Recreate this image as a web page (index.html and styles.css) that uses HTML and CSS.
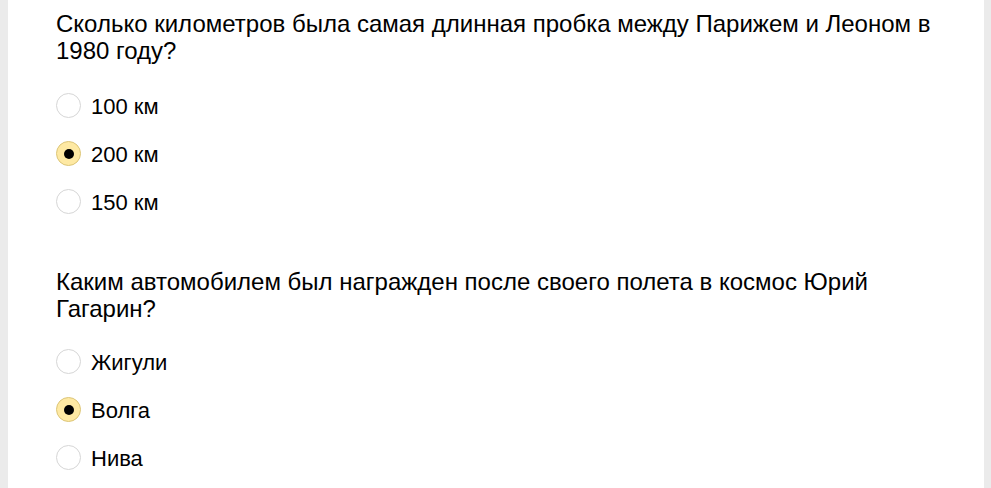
FILE: index.html
```html
<!DOCTYPE html>
<html lang="ru">
<head>
<meta charset="utf-8">
<title>Опрос</title>
<link rel="stylesheet" href="styles.css">
</head>
<body>
<div class="panel">
  <div class="question">
    <div class="q-title">Сколько километров была самая длинная пробка между Парижем и Леоном в 1980 году?</div>
    <label class="option"><input class="radio" type="radio" name="q1"><span class="opt-text">100 км</span></label>
    <label class="option"><input class="radio" type="radio" name="q1" checked><span class="opt-text">200 км</span></label>
    <label class="option"><input class="radio" type="radio" name="q1"><span class="opt-text">150 км</span></label>
  </div>
  <div class="question">
    <div class="q-title">Каким автомобилем был награжден после своего полета в космос Юрий Гагарин?</div>
    <label class="option"><input class="radio" type="radio" name="q2"><span class="opt-text">Жигули</span></label>
    <label class="option"><input class="radio" type="radio" name="q2" checked><span class="opt-text">Волга</span></label>
    <label class="option"><input class="radio" type="radio" name="q2"><span class="opt-text">Нива</span></label>
  </div>
</div>
</body>
</html>
```
FILE: styles.css
```css
html, body {
  margin: 0;
  padding: 0;
  background: #ebebeb;
  height: 100%;
  overflow: hidden;
}
body {
  font-family: Arial, "Liberation Sans", sans-serif;
  color: #000;
}
.panel {
  margin-left: 8px;
  width: 976px;
  min-height: 100%;
  background: #fff;
  box-sizing: border-box;
  padding: 10px 48px 0 48px;
}
.question {
  margin-bottom: 42px;
}
.q-title {
  font-size: 24px;
  line-height: 27px;
  margin-bottom: 18px;
}
.question + .question .q-title {
  margin-bottom: 16px;
}
.option {
  display: flex;
  align-items: center;
  height: 48px;
  font-size: 22px;
  line-height: 27px;
  cursor: pointer;
}
.radio {
  appearance: none;
  -webkit-appearance: none;
  margin: 0 10px 1px 0;
  width: 25px;
  height: 25px;
  box-sizing: border-box;
  border: 1px solid #d6d6d6;
  border-radius: 50%;
  background: #fff;
  display: flex;
  align-items: center;
  justify-content: center;
  flex: none;
}
.radio:checked {
  background: #fee9a3;
  border-color: #dcc577;
}
.radio:checked::after {
  content: "";
  width: 10px;
  height: 10px;
  border-radius: 50%;
  background: #000;
}
```
